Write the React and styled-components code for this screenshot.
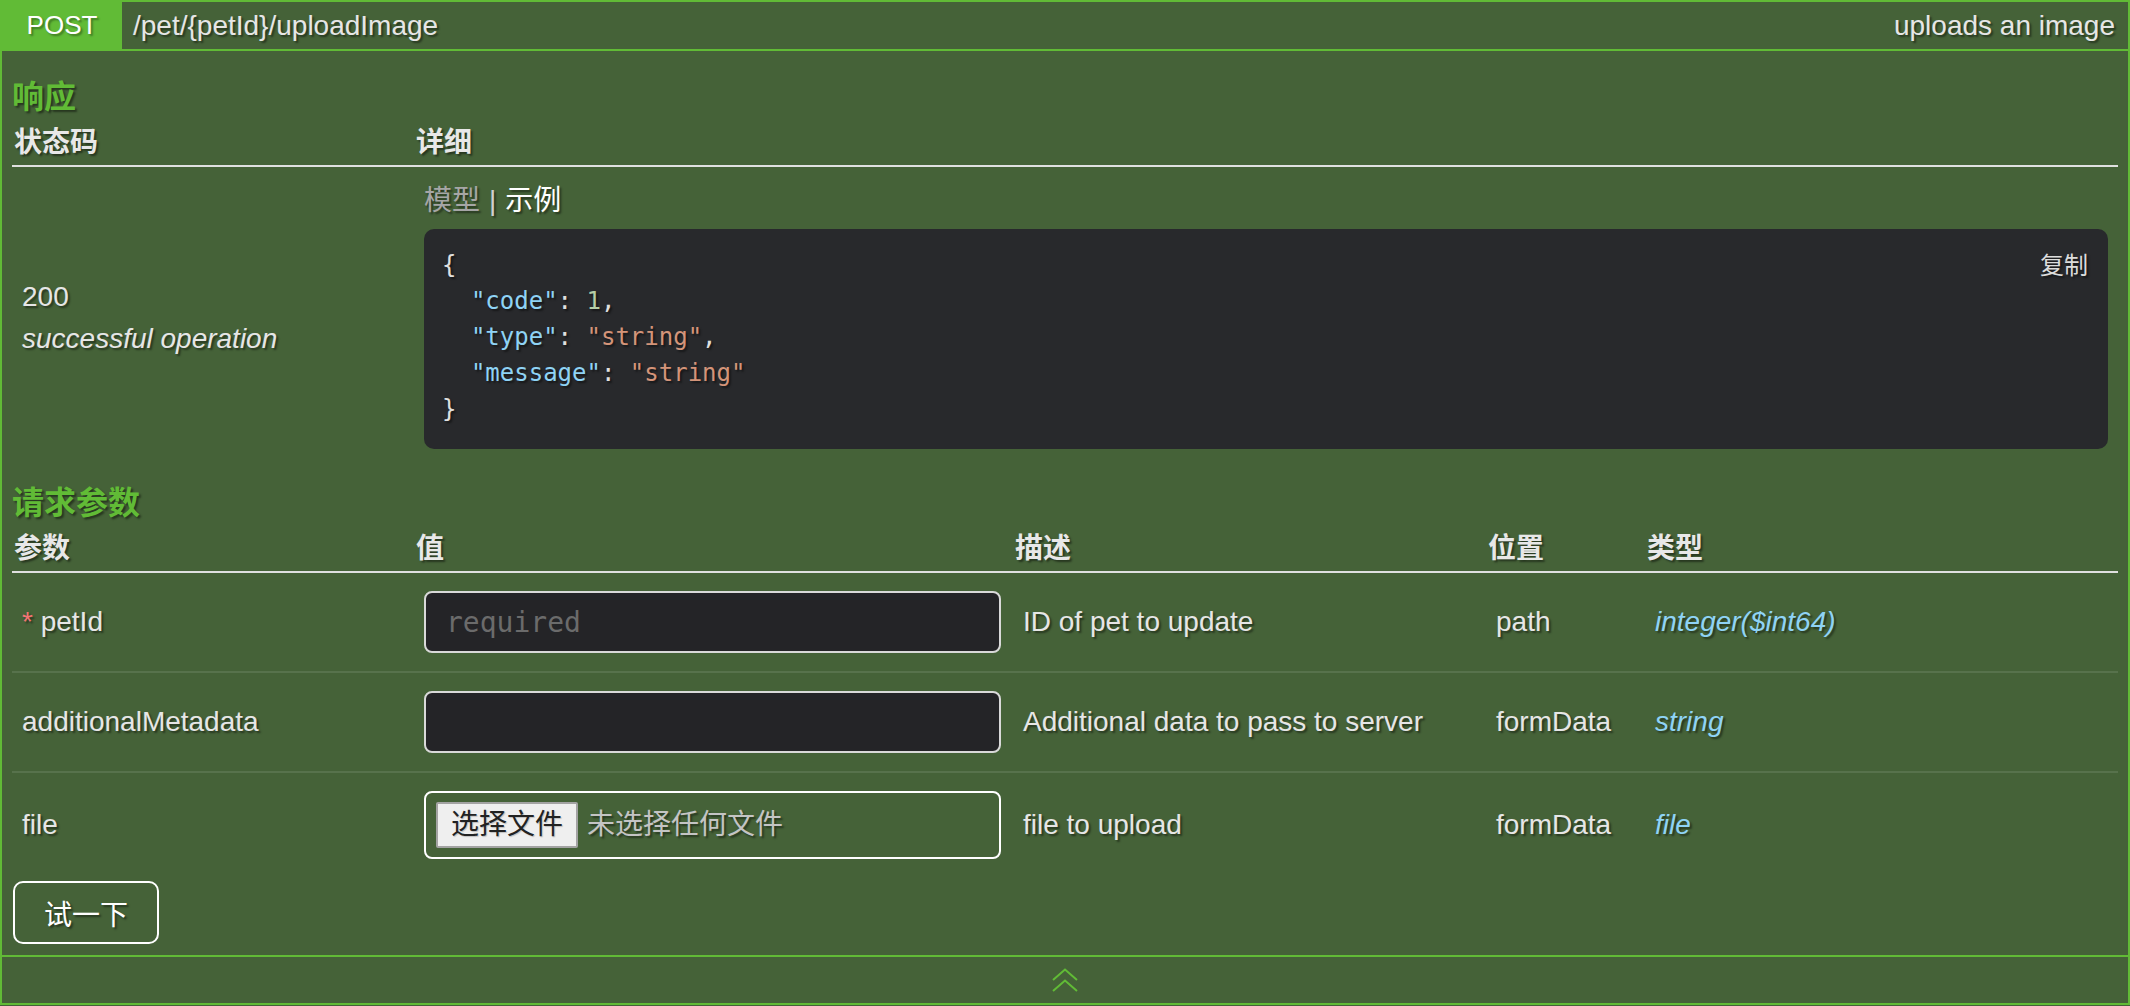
import React from 'react';
import styled, { createGlobalStyle } from 'styled-components';

const GREEN = '#61bb36';
const BG = '#456238';

const GlobalStyle = createGlobalStyle`
  * {
    box-sizing: border-box;
  }

  html, body {
    margin: 0;
    padding: 0;
    background: ${BG};
  }

  body {
    font-family: "Liberation Sans", "Noto Sans CJK SC", Arial, sans-serif;
    color: #e6e6e6;
    text-shadow: 2px 2px 2px rgba(0, 0, 0, 0.45);
  }
`;

const Opblock = styled.div`
  border: 2px solid ${GREEN};
  background: ${BG};
`;

const Summary = styled.div`
  display: flex;
  align-items: stretch;
  height: 49px;
  border-bottom: 2px solid ${GREEN};
  font-size: 28px;
`;

const Method = styled.span`
  display: flex;
  align-items: center;
  justify-content: center;
  width: 120px;
  background: ${GREEN};
  color: #fff;
  font-size: 26px;
  font-weight: 400;
  text-shadow: 2px 2px 2px rgba(0, 0, 0, 0.35);
`;

const Path = styled.span`
  display: flex;
  align-items: center;
  padding-left: 11px;
`;

const Description = styled.span`
  display: flex;
  align-items: center;
  margin-left: auto;
  padding-right: 13px;
`;

const Body = styled.div`
  padding: 0 10px;
`;

const SectionTitle = styled.h4`
  margin: ${p => p.$top}px 0 0;
  font-size: 32px;
  line-height: 40px;
  font-weight: 700;
  color: ${GREEN};
`;

const Table = styled.table`
  width: 100%;
  table-layout: fixed;
  border-collapse: separate;
  border-spacing: 0;
`;

const Th = styled.th`
  width: ${p => (p.$w ? `${p.$w}px` : 'auto')};
  padding: 8px 2px 4px;
  text-align: left;
  font-size: 28px;
  line-height: 36px;
  font-weight: 700;
  color: #e8e8e8;
  border-bottom: 2px solid #e0e0e0;
`;

const Td = styled.td`
  padding: 18px 10px;
  vertical-align: middle;
  font-size: 28px;
  line-height: 36px;
  border-bottom: ${p => (p.$last ? 'none' : '2px solid rgba(255, 255, 255, 0.1)')};
`;

const CodeCell = styled.td`
  padding: 16px 10px 20px;
  vertical-align: top;
`;

const StatusCode = styled.div`
  font-size: 28px;
  line-height: 42px;
`;

const StatusText = styled.div`
  font-size: 28px;
  line-height: 42px;
  font-style: italic;
`;

const Tabs = styled.div`
  font-size: 28px;
  line-height: 36px;
`;

const Tab = styled.span`
  color: ${p => (p.$active ? '#ffffff' : '#a6a6a6')};
`;

const TabDivider = styled.span`
  padding: 0 9px;
  color: #d0d0d0;
`;

const CodeBlock = styled.pre`
  position: relative;
  margin: 10px 0 0;
  padding: 18px 18px 22px;
  background: #28292c;
  border-radius: 10px;
  font-family: "DejaVu Sans Mono", "Liberation Mono", monospace;
  font-size: 24px;
  line-height: 36px;
  color: #e0e0e0;
`;

const CopyButton = styled.span`
  position: absolute;
  top: 22px;
  right: 20px;
  font-family: "Liberation Sans", "Noto Sans CJK SC", sans-serif;
  font-size: 24px;
  line-height: 30px;
  color: #dcdcdc;
`;

const Key = styled.span`
  color: #8fd3f5;
`;

const Num = styled.span`
  color: #b5cea8;
`;

const Str = styled.span`
  color: #d49479;
`;

const Required = styled.span`
  color: #f27474;
`;

const TypeName = styled.span`
  font-style: italic;
  color: #8fd3f5;
`;

const TextInput = styled.input`
  display: block;
  width: 577px;
  height: 62px;
  padding: 0 20px;
  background: #242427;
  border: 2px solid #d9d9d9;
  border-radius: 8px;
  color: #e6e6e6;
  font-family: "DejaVu Sans Mono", "Liberation Mono", monospace;
  font-size: 28px;
  outline: none;

  &::placeholder {
    color: #6b6b6b;
  }
`;

const FileField = styled.div`
  display: flex;
  align-items: center;
  gap: 9px;
  width: 577px;
  height: 68px;
  padding-left: 10px;
  border: 2px solid #ffffff;
  border-radius: 8px;
`;

const FileButton = styled.span`
  display: flex;
  align-items: center;
  height: 46px;
  padding: 0 13px;
  background: #efefef;
  border: 2px solid #a3a3a3;
  border-radius: 2px;
  color: #222;
  font-size: 28px;
  text-shadow: 1px 1px 1px rgba(0, 0, 0, 0.2);
`;

const FileHint = styled.span`
  font-size: 28px;
  color: #c4c4c4;
`;

const TryButton = styled.button`
  display: block;
  width: 146px;
  height: 63px;
  margin: 4px 0 11px 1px;
  background: transparent;
  border: 2px solid #ffffff;
  border-radius: 10px;
  color: #ffffff;
  font: inherit;
  font-size: 28px;
  text-shadow: inherit;
  cursor: pointer;
`;

const Footer = styled.div`
  display: flex;
  align-items: center;
  justify-content: center;
  height: 48px;
  border-top: 2px solid ${GREEN};
`;

const params = [
  { name: 'petId', required: true, placeholder: 'required', desc: 'ID of pet to update', in: 'path', type: 'integer($int64)' },
  { name: 'additionalMetadata', desc: 'Additional data to pass to server', in: 'formData', type: 'string' },
  { name: 'file', file: true, desc: 'file to upload', in: 'formData', type: 'file' },
];

const ChevronsUp = () => (
  <svg width="26" height="24" viewBox="0 0 26 24" fill="none" stroke={GREEN} strokeWidth="2">
    <path d="M1 12 L13 1.5 L25 12" />
    <path d="M1 23 L13 12.5 L25 23" />
  </svg>
);

const App = () => (
  <>
    <GlobalStyle />
    <Opblock>
      <Summary>
        <Method>POST</Method>
        <Path>/pet/{'{petId}'}/uploadImage</Path>
        <Description>uploads an image</Description>
      </Summary>

      <Body>
        <SectionTitle $top={26}>响应</SectionTitle>
        <Table>
          <thead>
            <tr>
              <Th $w={402}>状态码</Th>
              <Th>详细</Th>
            </tr>
          </thead>
          <tbody>
            <tr>
              <Td $last>
                <StatusCode>200</StatusCode>
                <StatusText>successful operation</StatusText>
              </Td>
              <CodeCell>
                <Tabs>
                  <Tab>模型</Tab>
                  <TabDivider>|</TabDivider>
                  <Tab $active>示例</Tab>
                </Tabs>
                <CodeBlock>
                  <CopyButton>复制</CopyButton>
{`{
  `}<Key>"code"</Key>: <Num>1</Num>,{`
  `}<Key>"type"</Key>: <Str>"string"</Str>,{`
  `}<Key>"message"</Key>: <Str>"string"</Str>{`
}`}
                </CodeBlock>
              </CodeCell>
            </tr>
          </tbody>
        </Table>

        <SectionTitle $top={14}>请求参数</SectionTitle>
        <Table>
          <thead>
            <tr>
              <Th $w={402}>参数</Th>
              <Th $w={599}>值</Th>
              <Th $w={473}>描述</Th>
              <Th $w={159}>位置</Th>
              <Th>类型</Th>
            </tr>
          </thead>
          <tbody>
            {params.map((param, index) => {
              const last = index === params.length - 1;
              return (
                <tr key={`param-row-${index}`}>
                  <Td $last={last}>
                    {param.required && <Required>* </Required>}
                    {param.name}
                  </Td>
                  <Td $last={last}>
                    {param.file ? (
                      <FileField>
                        <FileButton>选择文件</FileButton>
                        <FileHint>未选择任何文件</FileHint>
                      </FileField>
                    ) : (
                      <TextInput placeholder={param.placeholder || ''} />
                    )}
                  </Td>
                  <Td $last={last}>{param.desc}</Td>
                  <Td $last={last}>{param.in}</Td>
                  <Td $last={last}>
                    <TypeName>{param.type}</TypeName>
                  </Td>
                </tr>
              );
            })}
          </tbody>
        </Table>

        <TryButton>试一下</TryButton>
      </Body>

      <Footer>
        <ChevronsUp />
      </Footer>
    </Opblock>
  </>
);

export default App;
